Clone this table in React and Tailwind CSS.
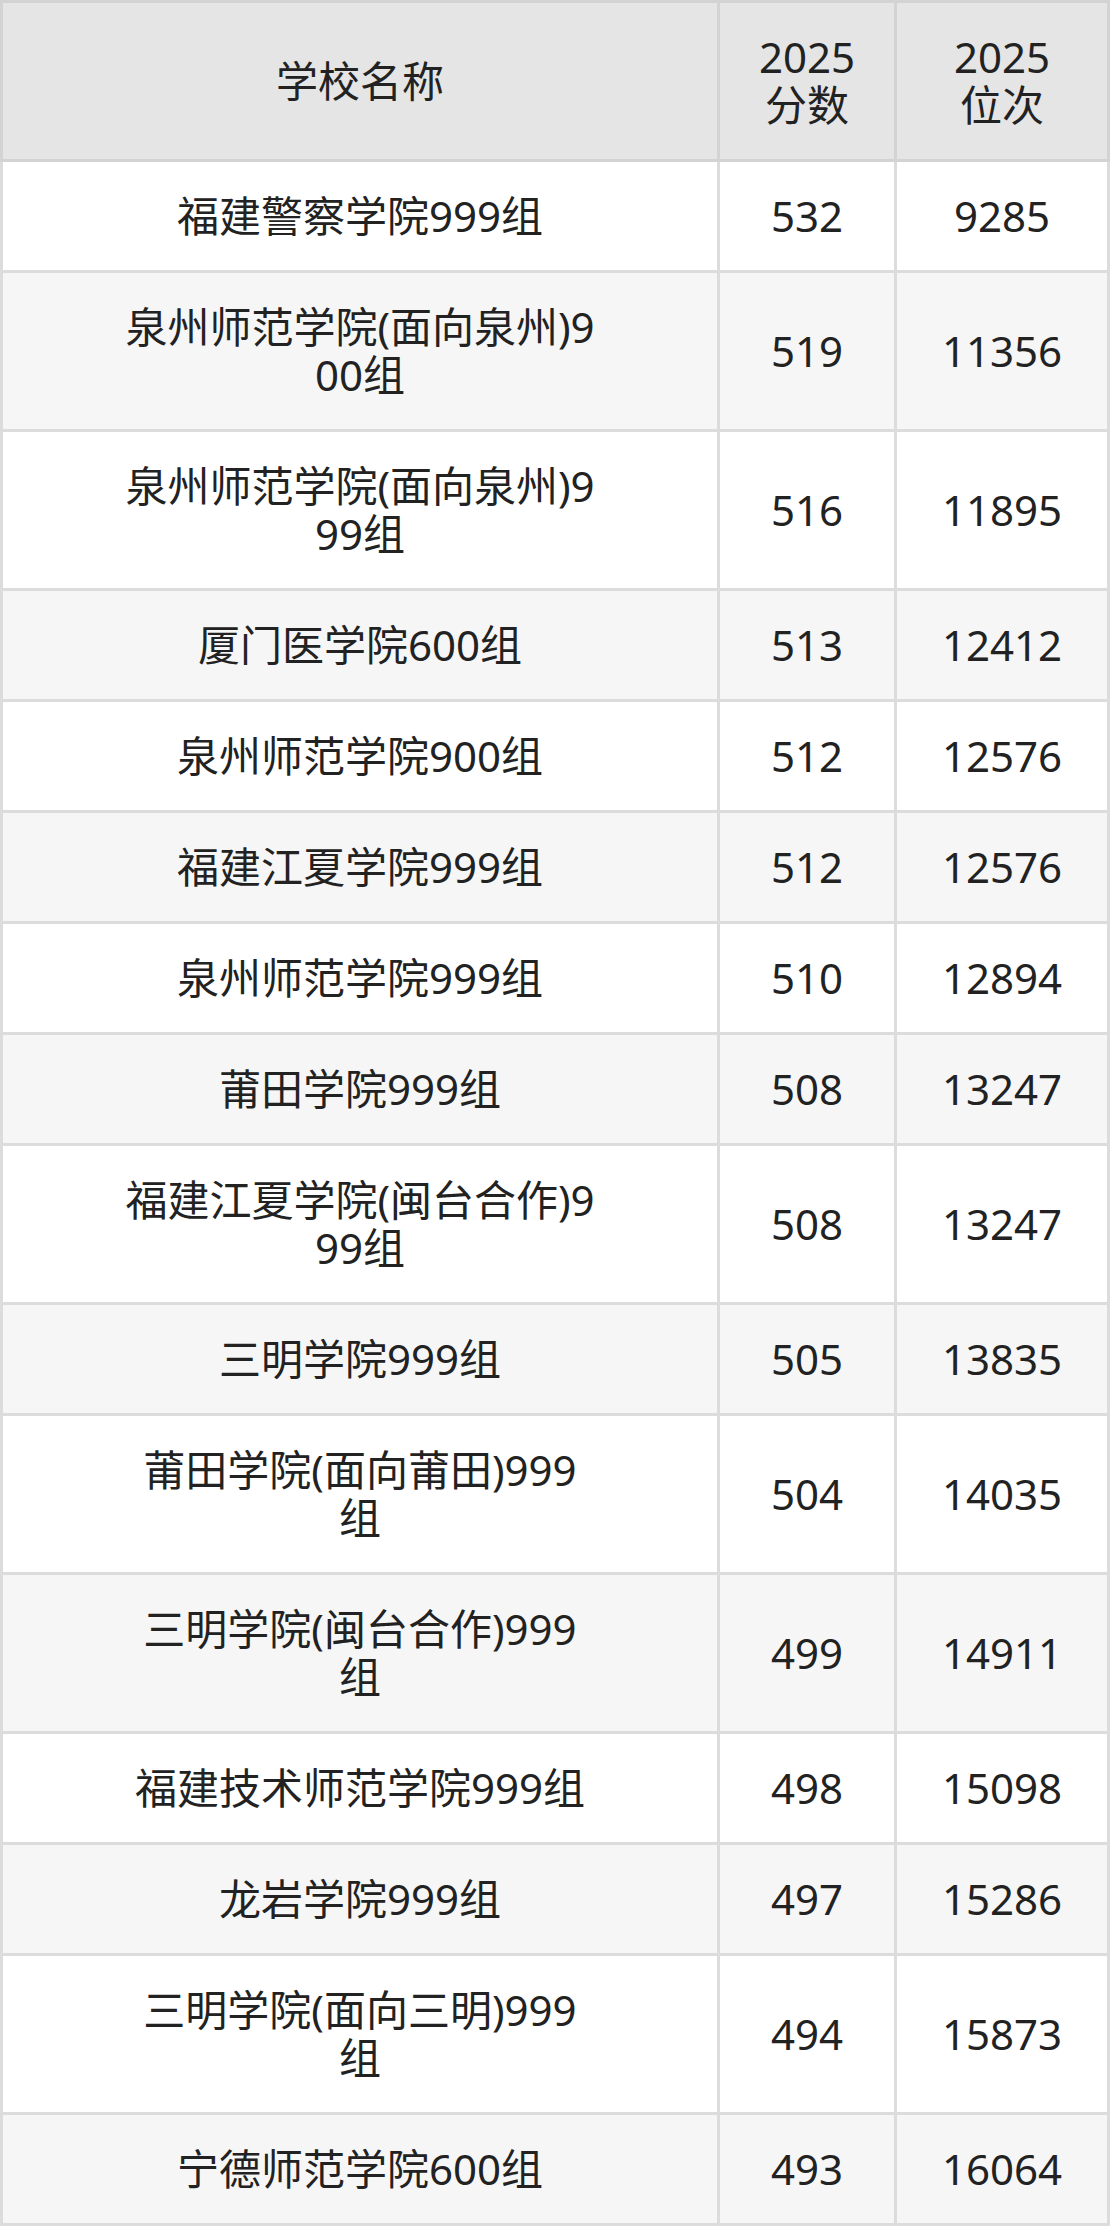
import React from "react";

const rows = [
  ["福建警察学院999组", "532", "9285"],
  ["泉州师范学院(面向泉州)9\n00组", "519", "11356"],
  ["泉州师范学院(面向泉州)9\n99组", "516", "11895"],
  ["厦门医学院600组", "513", "12412"],
  ["泉州师范学院900组", "512", "12576"],
  ["福建江夏学院999组", "512", "12576"],
  ["泉州师范学院999组", "510", "12894"],
  ["莆田学院999组", "508", "13247"],
  ["福建江夏学院(闽台合作)9\n99组", "508", "13247"],
  ["三明学院999组", "505", "13835"],
  ["莆田学院(面向莆田)999\n组", "504", "14035"],
  ["三明学院(闽台合作)999\n组", "499", "14911"],
  ["福建技术师范学院999组", "498", "15098"],
  ["龙岩学院999组", "497", "15286"],
  ["三明学院(面向三明)999\n组", "494", "15873"],
  ["宁德师范学院600组", "493", "16064"],
];

const cell = "flex items-center justify-center text-center whitespace-pre-line py-[30px]";

export default function App() {
  return (
    <div
      className="w-[1110px] text-[42px] leading-[48px] text-[#222222]"
      style={{ fontFamily: '"Noto Sans", "Noto Sans CJK SC", sans-serif' }}
    >
      {/* header */}
      <div className="grid grid-cols-[714px_174px_210px] gap-x-[3px] p-[3px] bg-[#d3d3d3]">
        <div className={`${cell} bg-[#e5e5e5]`}>学校名称</div>
        <div className={`${cell} bg-[#e5e5e5]`}>{"2025\n分数"}</div>
        <div className={`${cell} bg-[#e5e5e5]`}>{"2025\n位次"}</div>
      </div>

      {/* body */}
      <div className="grid grid-cols-[714px_174px_210px] gap-[3px] px-[3px] pb-[3px] bg-[#dcdcdc]">
        {rows.map((r, i) => {
          const bg = i % 2 === 0 ? "bg-white" : "bg-[#f6f6f6]";
          return (
            <React.Fragment key={i}>
              <div className={`${cell} ${bg}`}>{r[0]}</div>
              <div className={`${cell} ${bg}`}>{r[1]}</div>
              <div className={`${cell} ${bg}`}>{r[2]}</div>
            </React.Fragment>
          );
        })}
      </div>
    </div>
  );
}
